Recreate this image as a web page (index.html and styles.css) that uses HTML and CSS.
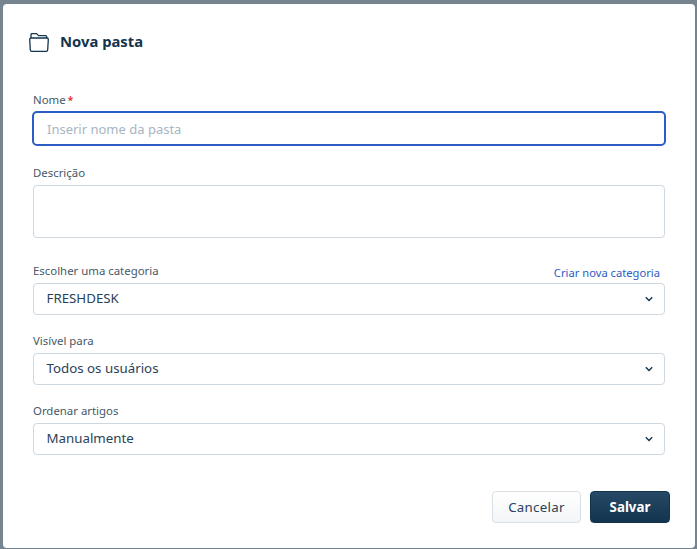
FILE: index.html
```html
<!DOCTYPE html>
<html lang="pt">
<head>
<meta charset="utf-8">
<title>Nova pasta</title>
<link rel="stylesheet" href="styles.css">
</head>
<body>
<div class="modal">
  <header class="modal-head">
    <svg class="folder" width="20" height="19" viewBox="0 0 20 19" fill="none" stroke="#12344d" stroke-width="1.300" stroke-linejoin="round">
      <path d="M2 5V1.700C2 1 2.500.6 3.200.6H7.500L9.500 2.600H16.500C17.200 2.600 17.700 3.100 17.700 3.800V5"/>
      <path d="M.7 6.500C.7 5.700 1.300 5 2 5H18C18.700 5 19.300 5.700 19.300 6.500L18.700 16.800C18.600 17.600 18 18.300 17.200 18.300H2.800C2 18.300 1.400 17.600 1.300 16.800Z"/>
    </svg>
    <h1 class="title">Nova pasta</h1>
  </header>
  <form class="form">
    <div class="field field-name">
      <label class="label">Nome<span class="req">*</span></label>
      <div class="input focused"><span class="placeholder">Inserir nome da pasta</span></div>
    </div>
    <div class="field field-desc">
      <label class="label">Descrição</label>
      <div class="textarea"></div>
    </div>
    <div class="field field-cat">
      <div class="label-row">
        <label class="label">Escolher uma categoria</label>
        <a class="link">Criar nova categoria</a>
      </div>
      <div class="select"><span>FRESHDESK</span><svg class="chev" width="8" height="6" viewBox="0 0 8 6" fill="none" stroke="#12344d" stroke-width="1.400"><path d="M.8 1.200 4 4.400 7.200 1.200"/></svg></div>
    </div>
    <div class="field field-sel">
      <label class="label">Visível para</label>
      <div class="select"><span>Todos os usuários</span><svg class="chev" width="8" height="6" viewBox="0 0 8 6" fill="none" stroke="#12344d" stroke-width="1.400"><path d="M.8 1.200 4 4.400 7.200 1.200"/></svg></div>
    </div>
    <div class="field field-sel">
      <label class="label">Ordenar artigos</label>
      <div class="select"><span>Manualmente</span><svg class="chev" width="8" height="6" viewBox="0 0 8 6" fill="none" stroke="#12344d" stroke-width="1.400"><path d="M.8 1.200 4 4.400 7.200 1.200"/></svg></div>
    </div>
    <div class="actions">
      <button type="button" class="btn btn-cancel">Cancelar</button>
      <button type="button" class="btn btn-save">Salvar</button>
    </div>
  </form>
</div>
</body>
</html>
```
FILE: styles.css
```css
* { box-sizing: border-box; }
html, body { height: 100%; }
body {
  margin: 0;
  background: #75848f;
  font-family: "Noto Sans", sans-serif;
  color: #12344d;
  overflow: hidden;
  padding: 4px 2px 1px 3px;
}
.modal {
  height: 544px;
  background: #fff;
  border-radius: 4px;
  padding: 0 30px;
}
.modal-head {
  display: flex;
  align-items: center;
  gap: 11px;
  height: 76px;
  margin-left: -4px;
}
.folder { flex: none; margin-top: 1px; }
.title {
  margin: 0 0 3px;
  font-size: 14.8px;
  font-weight: 700;
  color: #12344d;
}
.form { display: flex; flex-direction: column; }
.field { display: flex; flex-direction: column; }
.label {
  font-size: 11.4px;
  line-height: 16px;
  color: #475867;
}
.req { color: #e43538; margin-left: 2px; font-size: 10px; font-weight: 700; }
.field-name { margin-top: 12px; }
.field-name .label { margin-bottom: 3px; }
.input {
  height: 35px;
  border: 2px solid #2c5cc5;
  border-radius: 5px;
  display: flex;
  align-items: center;
  padding: 0 13px;
  margin: 0 -1px;
}
.placeholder {
  font-size: 13px;
  color: #a8b5c2;
}
.field-desc { margin-top: 19px; }
.field-desc .label { margin-bottom: 4px; }
.textarea {
  height: 53px;
  border: 1px solid #cfd7df;
  border-radius: 4px;
}
.field-cat { margin-top: 25px; }
.label-row { display: flex; justify-content: space-between; align-items: flex-end; margin-bottom: 4px; }
.link {
  font-size: 11.2px;
  line-height: 16px;
  color: #2c5cc5;
  margin: 0 5px -2px 0;
}
.select {
  height: 32px;
  border: 1px solid #cfd7df;
  border-radius: 4px;
  display: flex;
  align-items: center;
  justify-content: space-between;
  padding: 0 11px 3px 12.5px;
  font-size: 13.3px;
  color: #2a4257;
}
.chev { margin-top: 3px; }
.field-sel { margin-top: 18px; }
.field-sel .label { margin-bottom: 4px; }
.actions {
  display: flex;
  justify-content: flex-end;
  gap: 9px;
  margin-top: 36px;
  margin-right: -5px;
}
.btn {
  height: 32px;
  border-radius: 4px;
  font-family: "Noto Sans", sans-serif;
  font-size: 13.3px;
  padding: 0;
}
.btn-cancel {
  width: 89px;
  border: 1px solid #dadfe3;
  background: linear-gradient(#fff, #f3f5f7);
  color: #2a4257;
  letter-spacing: .3px;
}
.btn-save {
  width: 80px;
  border: 1px solid #12344d;
  background: linear-gradient(#264966, #12344d);
  color: #fff;
  font-weight: 700;
}
```
